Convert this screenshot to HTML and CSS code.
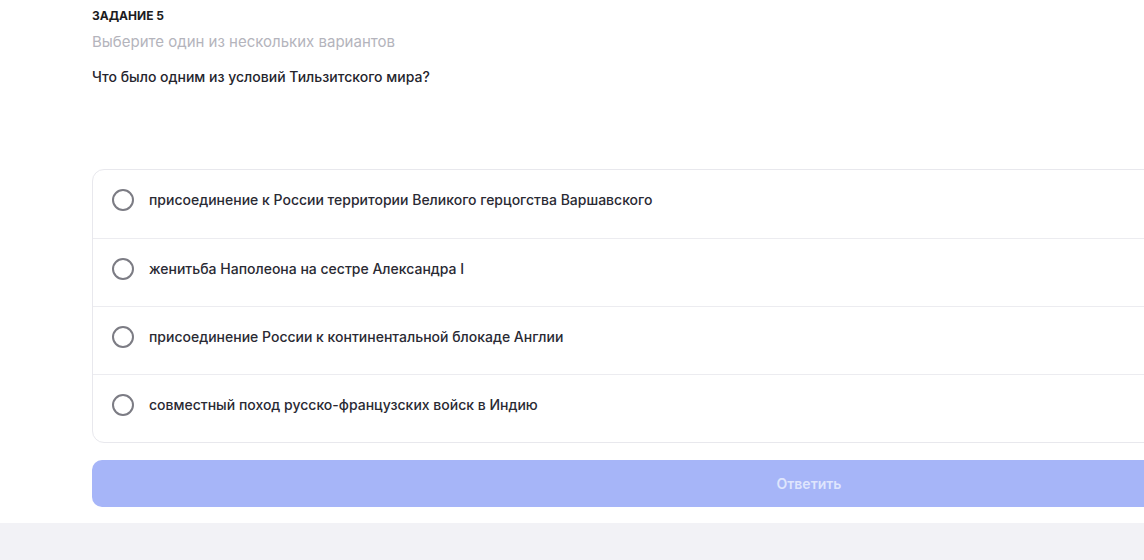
FILE: index.html
```html
<!DOCTYPE html>
<html lang="ru">
<head>
  <meta charset="UTF-8">
  <title>Задание 5</title>
  <link rel="stylesheet" href="styles.css">
</head>
<body>

<div class="page">
  <div class="task">
    <div class="task-label">ЗАДАНИЕ 5</div>
    <div class="task-hint">Выберите один из нескольких вариантов</div>
    <div class="task-question">Что было одним из условий Тильзитского мира?</div>

    <div class="options">
      <label class="option">
        <input type="radio" name="answer">
        <span class="radio"></span>
        <span class="option-text">присоединение к России территории Великого герцогства Варшавского</span>
      </label>
      <label class="option">
        <input type="radio" name="answer">
        <span class="radio"></span>
        <span class="option-text">женитьба Наполеона на сестре Александра I</span>
      </label>
      <label class="option">
        <input type="radio" name="answer">
        <span class="radio"></span>
        <span class="option-text">присоединение России к континентальной блокаде Англии</span>
      </label>
      <label class="option">
        <input type="radio" name="answer">
        <span class="radio"></span>
        <span class="option-text">совместный поход русско-французских войск в Индию</span>
      </label>
    </div>

    <button class="submit" disabled>Ответить</button>
  </div>
</div>

</body>
</html>
```

FILE: styles.css
```css
* { box-sizing: border-box; }

body {
  margin: 0;
  padding: 0;
  background: #f2f2f6;
  font-family: Inter, "Noto Sans", sans-serif;
  color: #24242c;
  overflow: hidden;
}

.page {
  background: #fff;
  padding: 8px 0 16px 92px;
}

.task {
  width: 1434px;
}

.task-label {
  font-size: 12px;
  font-weight: 700;
  line-height: 16px;
  color: #1c1c22;
}

.task-hint {
  margin-top: 9px;
  font-size: 15px;
  line-height: 18px;
  color: #b4b4bc;
}

.task-question {
  margin-top: 17px;
  font-size: 14px;
  font-weight: 500;
  line-height: 18px;
  color: #25252d;
}

.options {
  margin-top: 83px;
  border: 1px solid #e8e8ed;
  border-radius: 12px;
  overflow: hidden;
}

.option {
  display: flex;
  align-items: center;
  gap: 15px;
  height: 68px;
  padding: 0 19px 8px;
  border-top: 1px solid #ececf0;
  cursor: pointer;
}

.option:first-child {
  border-top: none;
}

.option input {
  display: none;
}

.radio {
  width: 22px;
  height: 22px;
  border: 2px solid #7c7c84;
  border-radius: 50%;
  flex-shrink: 0;
}

.option input:checked + .radio {
  border: 6px solid #6b7ff0;
}

.option-text {
  font-size: 14px;
  font-weight: 500;
  line-height: 18px;
  color: #2a2a33;
}

.submit {
  display: block;
  width: 100%;
  height: 47px;
  margin-top: 17px;
  border: none;
  border-radius: 10px;
  background: #a6b5f8;
  color: #dfe5fd;
  font-family: inherit;
  font-size: 14px;
  font-weight: 600;
}
```
